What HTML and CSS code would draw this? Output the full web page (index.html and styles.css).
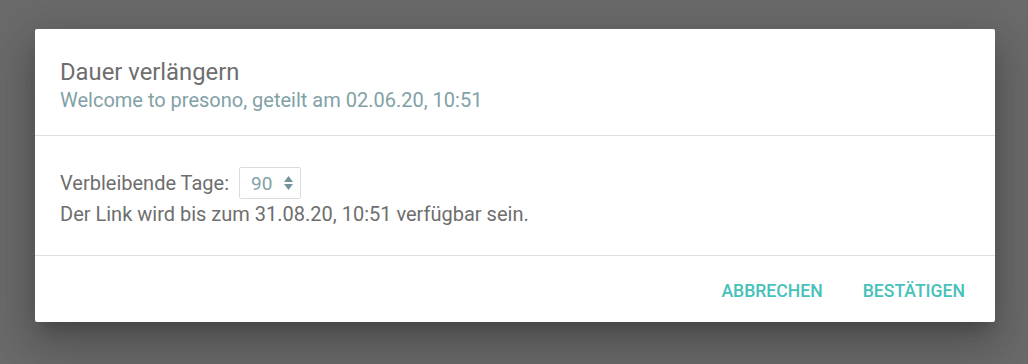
FILE: index.html
```html
<!DOCTYPE html>
<html lang="de">
<head>
<meta charset="utf-8">
<link rel="stylesheet" href="styles.css">
</head>
<body>
<div class="overlay">
  <div class="dialog">
    <div class="dialog-header">
      <div class="title">Dauer verlängern</div>
      <div class="subtitle">Welcome to presono, geteilt am 02.06.20, 10:51</div>
    </div>
    <div class="dialog-body">
      <div class="row">
        <span class="label">Verbleibende Tage:</span>
        <div class="number-input">
          <span class="value">90</span>
          <svg class="spinner" width="9" height="14" viewBox="0 0 9 14"><path d="M4.5 0 L9 6 L0 6 Z"/><path d="M0 8 L9 8 L4.5 14 Z"/></svg>
        </div>
      </div>
      <div class="info">Der Link wird bis zum 31.08.20, 10:51 verfügbar sein.</div>
    </div>
    <div class="dialog-footer">
      <button class="btn">Abbrechen</button>
      <button class="btn">Bestätigen</button>
    </div>
  </div>
</div>
</body>
</html>
```
FILE: styles.css
```css
html, body {
  margin: 0;
  padding: 0;
  width: 1028px;
  height: 364px;
  overflow: hidden;
}
body {
  background: #6a6a6a;
  font-family: Roboto, "Liberation Sans", sans-serif;
}
.overlay {
  padding: 29px 33px 0 35px;
}
.dialog {
  width: 960px;
  height: 293px;
  background: #fff;
  border-radius: 2px;
  box-shadow: 0 11px 15px -7px rgba(0,0,0,0.2), 0 24px 38px 3px rgba(0,0,0,0.14), 0 9px 46px 8px rgba(0,0,0,0.12);
  display: flex;
  flex-direction: column;
}
.dialog-header {
  height: 107px;
  box-sizing: border-box;
  padding: 28px 25px 0;
  border-bottom: 1px solid #e0e0e0;
}
.title {
  font-size: 23.8px;
  line-height: 30px;
  color: #6e6e6e;
}
.subtitle {
  font-size: 20px;
  line-height: 26px;
  color: #82a1a6;
}
.dialog-body {
  height: 120px;
  box-sizing: border-box;
  padding: 31px 25px 0;
  border-bottom: 1px solid #e0e0e0;
  color: #6e6e6e;
  font-size: 20px;
}
.row {
  display: flex;
  align-items: center;
  gap: 10px;
  height: 32px;
}
.number-input {
  width: 62px;
  height: 32px;
  box-sizing: border-box;
  border: 1px solid #dcdcdc;
  border-radius: 2px;
  display: flex;
  align-items: center;
  gap: 12px;
  padding-left: 11px;
}
.value {
  color: #82a1a6;
  font-size: 19px;
}
.spinner path {
  fill: #75959a;
}
.info {
  margin-top: 1px;
  line-height: 28px;
}
.dialog-footer {
  flex: 1;
  display: flex;
  justify-content: flex-end;
  align-items: center;
  gap: 40px;
  padding: 4px 30px 0;
}
.btn {
  border: none;
  background: none;
  padding: 0;
  font-family: Roboto, "Liberation Sans", sans-serif;
  font-weight: 500;
  font-size: 17.6px;
  text-transform: uppercase;
  color: #47c1ba;
  cursor: pointer;
}
```
